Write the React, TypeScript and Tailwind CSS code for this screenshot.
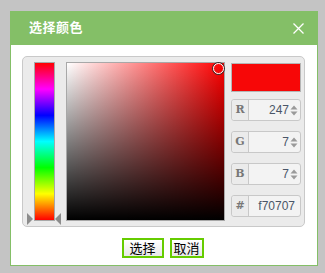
import React from 'react';

const rows = [
  { label: 'R', value: '247', spin: true },
  { label: 'G', value: '7', spin: true },
  { label: 'B', value: '7', spin: true },
  { label: '#', value: 'f70707', spin: false },
];

function Spinner() {
  return (
    <svg width="8" height="13" viewBox="0 0 8 13" className="ml-[1px] shrink-0">
      <path d="M0.5 5.5 L4 1.5 L7.5 5.5 Z" fill="#9a9a9a" />
      <path d="M0.5 7.5 L4 11.5 L7.5 7.5 Z" fill="#9a9a9a" />
    </svg>
  );
}

export default function App() {
  return (
    <div className="w-[325px] h-[273px] bg-[#c4c4c4] pt-[11px] pl-[10px] overflow-hidden" style={{ fontFamily: '"Liberation Sans", Arial, "Noto Sans CJK SC", sans-serif' }}>
      <div className="w-[308px] h-[255px] flex flex-col">
        {/* Header */}
        <div className="h-[34px] bg-[#84bf67] flex items-center justify-between pl-[19px] pr-[14px]">
          <span className="text-white text-[13px] font-bold tracking-[0.5px]">选择颜色</span>
          <svg width="11" height="11" viewBox="0 0 11 11">
            <path d="M0.5 0.5 L10.5 10.5 M10.5 0.5 L0.5 10.5" stroke="#fff" strokeWidth="1.3" />
          </svg>
        </div>

        {/* Body */}
        <div className="flex-1 bg-white border border-t-0 border-[#84bf67] px-[11px] pt-[11px] flex flex-col">
          <div className="w-[283px] h-[171px] bg-[#ebebeb] border border-[#c9c9c9] rounded-[5px] pl-[11px] pt-[5px] flex">
            {/* Hue bar */}
            <div className="relative w-[21px] h-[159px] border border-[#a8a8a8] bg-[linear-gradient(to_bottom,#ff0000_0%,#ff00ff_16.67%,#0000ff_33.33%,#00ffff_50%,#00ff00_66.67%,#ffff00_83.33%,#ff0000_100%)]">
              <div className="absolute left-[-8px] top-[150px] w-0 h-0 border-y-[6px] border-y-transparent border-l-[6px] border-l-[#8c8c8c]" />
              <div className="absolute right-[-7px] top-[150px] w-0 h-0 border-y-[6px] border-y-transparent border-r-[6px] border-r-[#8c8c8c]" />
            </div>

            {/* Saturation / value square */}
            <div className="relative ml-[11px] w-[159px] h-[159px] border border-[#a8a8a8] bg-[linear-gradient(to_right,#ffffff,#ff0000)]">
              <div className="absolute inset-0 bg-[linear-gradient(to_bottom,rgba(0,0,0,0),#000000)]" />
              <div className="absolute right-[0px] top-[0px] w-[11px] h-[11px] rounded-full border-[1.5px] border-white shadow-[0_0_0_1px_#333]" />
            </div>

            {/* Right column */}
            <div className="ml-[6px] w-[70px] pt-[1px] flex flex-col">
              <div className="h-[29px] bg-[#f70707] border border-[#b5b5b5]" />
              <div className="mt-[7px] flex flex-col gap-[10px]">
                {rows.map((r) => (
                  <div key={r.label} className="h-[22px] flex border border-[#c8c8c8] rounded-[3px] bg-[#f3f3f3]">
                    <div className="w-[17px] border-r border-[#c8c8c8] bg-[#ebebeb] rounded-l-[3px] flex items-center justify-center text-[11px] font-bold text-[#777]" style={{ fontFamily: '"DejaVu Serif", "Liberation Serif", serif' }}>
                      {r.label}
                    </div>
                    <div className={`flex-1 flex items-center justify-end ${r.spin ? 'pr-[2px]' : 'pr-[5px]'}`}>
                      <span className="text-[12px] text-[#4a5668]">{r.value}</span>
                      {r.spin && <Spinner />}
                    </div>
                  </div>
                ))}
              </div>
            </div>
          </div>

          {/* Buttons */}
          <div className="mt-[11px] flex justify-center gap-[6px] pr-[3px]">
            <button className="w-[42px] h-[20px] border-2 border-[#66cc00] bg-[linear-gradient(to_bottom,#ffffff,#e8e8e8)] text-[13px] text-black leading-none flex items-center justify-center">
              选择
            </button>
            <button className="w-[34px] h-[20px] border-2 border-[#66cc00] bg-[linear-gradient(to_bottom,#ffffff,#e8e8e8)] text-[13px] text-black leading-none flex items-center justify-center">
              取消
            </button>
          </div>
        </div>
      </div>
    </div>
  );
}
